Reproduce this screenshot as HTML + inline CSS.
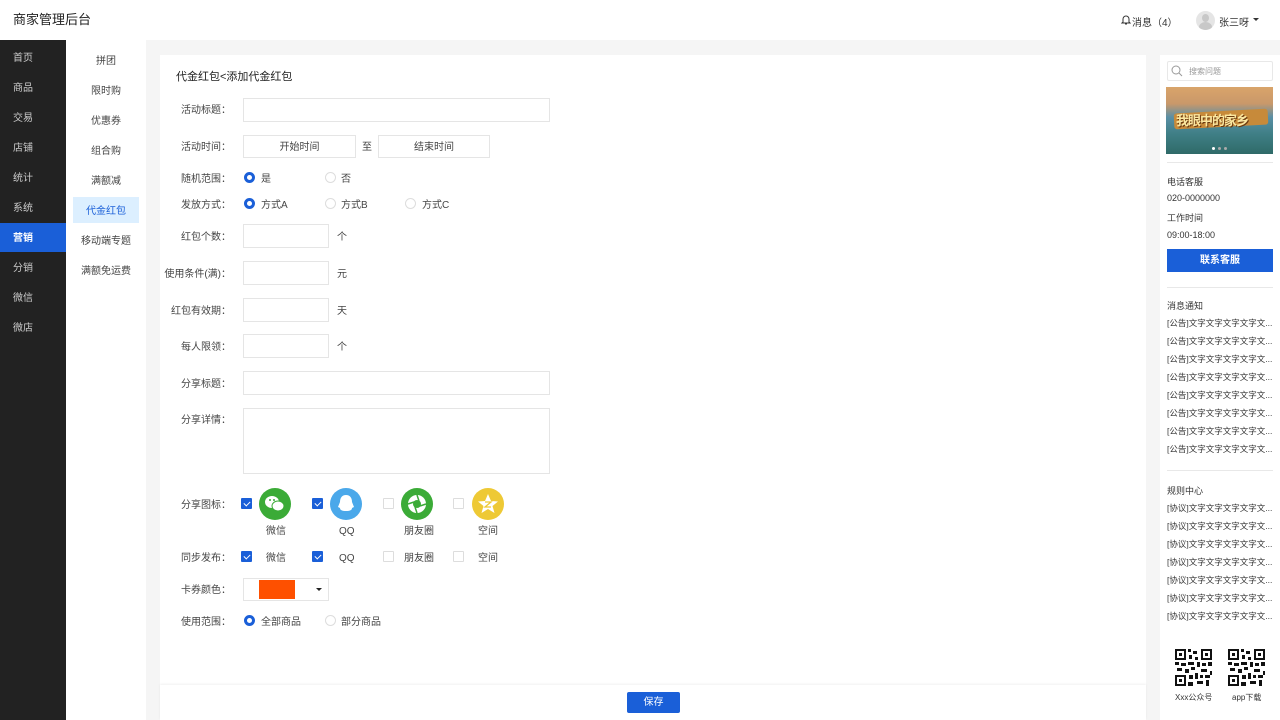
<!DOCTYPE html>
<html><head><meta charset="utf-8"><style>
*{margin:0;padding:0;box-sizing:border-box}
body{width:1280px;height:720px;overflow:hidden;background:#f5f5f5;font-family:"Liberation Sans","Noto Sans CJK SC",sans-serif;color:#333;position:relative;font-size:10px}
.a{position:absolute}
.hdr{left:0;top:0;width:1280px;height:40px;background:#fff}
.side{left:0;top:40px;width:66px;height:680px;background:#222}
.side div{position:absolute;left:13px;color:#ccc;font-size:10px;line-height:12px;margin-top:1px}
.sub{left:66px;top:40px;width:80px;height:680px;background:#fff}
.sub div{position:absolute;width:80px;text-align:center;font-size:10px;color:#444;line-height:12px;margin-top:1px}
.card{left:160px;top:55px;width:986px;height:640px;background:#fff}
.lbl{position:absolute;width:80px;text-align:right;font-size:10px;color:#444;line-height:12px;left:151px;margin-top:2px}
.inp{position:absolute;border:1px solid #e5e5e5;background:#fff;text-align:center;font-size:10px;color:#444}
.r{position:absolute;width:11px;height:11px;border-radius:50%;border:1px solid #ddd;background:#fff}
.r.on{border:3px solid #1a5fd8}
.t{position:absolute;font-size:10px;color:#444;line-height:12px;margin-top:2px}
.cb{position:absolute;width:11px;height:11px;border:1px solid #ddd;border-radius:1px;background:#fff}
.cb.on{background:#1a5fd8;border-color:#1a5fd8}
.cb.on:after{content:"";position:absolute;left:3px;top:1px;width:3px;height:5px;border:solid #fff;border-width:0 1.3px 1.3px 0;transform:rotate(45deg)}
.ic{position:absolute;width:32px;height:32px;border-radius:50%}
.rp{left:1160px;top:55px;width:120px;height:665px;background:#fff}
.rt{position:absolute;left:1167px;font-size:9px;color:#333;line-height:11px;white-space:nowrap}
.hr{position:absolute;left:1167px;width:106px;height:1px;background:#e8e8e8}
</style></head><body>
<div class="a hdr"></div>
<div class="a" style="left:13px;top:11px;font-size:13px;color:#222;line-height:18px">商家管理后台</div>
<svg class="a" style="left:1121px;top:14px" width="10" height="12" viewBox="0 0 10 12"><path d="M2 8V5a3 3 0 0 1 6 0v3l1 1H1z M4 10h2" fill="none" stroke="#333" stroke-width="1"/></svg>
<div class="a" style="left:1132px;top:14px;font-size:10px">消息（4）</div>
<div class="a" style="left:1196px;top:11px;width:19px;height:19px;border-radius:50%;background:#e5e5e5;overflow:hidden"><div style="position:absolute;left:6px;top:3px;width:7px;height:8px;border-radius:50%;background:#c8c8c8"></div><div style="position:absolute;left:3px;top:11px;width:13px;height:10px;border-radius:50%;background:#c8c8c8"></div></div>
<div class="a" style="left:1219px;top:14px;font-size:10px">张三呀</div>
<div class="a" style="left:1253px;top:18px;border:3px solid transparent;border-top:3px solid #333"></div>

<div class="a side">
<div style="top:12px">首页</div><div style="top:42px">商品</div><div style="top:72px">交易</div><div style="top:102px">店铺</div><div style="top:132px">统计</div><div style="top:162px">系统</div>
<div style="left:0;top:183px;width:66px;height:29px;background:#1a5fd8;margin:0"></div>
<div style="top:192px;color:#fff;font-weight:bold">营销</div>
<div style="top:222px">分销</div><div style="top:252px">微信</div><div style="top:282px">微店</div>
</div>
<div class="a sub">
<div style="top:15px">拼团</div><div style="top:45px">限时购</div><div style="top:75px">优惠券</div><div style="top:105px">组合购</div><div style="top:135px">满额减</div>
<div style="left:7px;top:157px;width:66px;height:26px;background:#dcefff;margin:0"></div>
<div style="top:165px;color:#1a5fd8">代金红包</div>
<div style="top:195px">移动端专题</div><div style="top:225px">满额免运费</div>
</div>

<div class="a card"></div>
<div class="t" style="left:176px;top:69px;font-size:11px;color:#222">代金红包&lt;添加代金红包</div>

<div class="lbl" style="top:103px">活动标题：</div><div class="inp" style="left:243px;top:98px;width:307px;height:24px"></div>
<div class="lbl" style="top:140px">活动时间：</div>
<div class="inp" style="left:243px;top:135px;width:113px;height:23px;line-height:23px">开始时间</div>
<div class="t" style="left:362px;top:140px">至</div>
<div class="inp" style="left:378px;top:135px;width:112px;height:23px;line-height:23px">结束时间</div>
<div class="lbl" style="top:172px">随机范围：</div>
<div class="r on" style="left:244px;top:172px"></div><div class="t" style="left:261px;top:172px">是</div>
<div class="r" style="left:325px;top:172px"></div><div class="t" style="left:341px;top:172px">否</div>
<div class="lbl" style="top:198px">发放方式：</div>
<div class="r on" style="left:244px;top:198px"></div><div class="t" style="left:261px;top:198px">方式A</div>
<div class="r" style="left:325px;top:198px"></div><div class="t" style="left:341px;top:198px">方式B</div>
<div class="r" style="left:405px;top:198px"></div><div class="t" style="left:422px;top:198px">方式C</div>
<div class="lbl" style="top:230px">红包个数：</div><div class="inp" style="left:243px;top:224px;width:86px;height:24px"></div><div class="t" style="left:337px;top:230px">个</div>
<div class="lbl" style="top:267px">使用条件(满)：</div><div class="inp" style="left:243px;top:261px;width:86px;height:24px"></div><div class="t" style="left:337px;top:267px">元</div>
<div class="lbl" style="top:304px">红包有效期：</div><div class="inp" style="left:243px;top:298px;width:86px;height:24px"></div><div class="t" style="left:337px;top:304px">天</div>
<div class="lbl" style="top:340px">每人限领：</div><div class="inp" style="left:243px;top:334px;width:86px;height:24px"></div><div class="t" style="left:337px;top:340px">个</div>
<div class="lbl" style="top:377px">分享标题：</div><div class="inp" style="left:243px;top:371px;width:307px;height:24px"></div>
<div class="lbl" style="top:413px">分享详情：</div><div class="inp" style="left:243px;top:408px;width:307px;height:66px"></div>

<div class="lbl" style="top:498px">分享图标：</div>
<div class="cb on" style="left:241px;top:498px"></div>
<div class="ic" style="left:259px;top:488px;background:#3bab37"><svg width="32" height="32" viewBox="0 0 32 32"><ellipse cx="13" cy="14" rx="7" ry="6" fill="#fff"/><ellipse cx="19" cy="18" rx="6" ry="5" fill="#fff" stroke="#3bab37" stroke-width="1"/><circle cx="11" cy="12" r="1" fill="#3bab37"/><circle cx="15" cy="12" r="1" fill="#3bab37"/></svg></div>
<div class="t" style="left:266px;top:524px">微信</div>
<div class="cb on" style="left:312px;top:498px"></div>
<div class="ic" style="left:330px;top:488px;background:#4aa8ea"><svg width="32" height="32" viewBox="0 0 32 32"><path d="M16 7c-4 0-6 3-6 7l-2 5 2 1c0 2 2 3 6 3s6-1 6-3l2-1-2-5c0-4-2-7-6-7z" fill="#fff"/></svg></div>
<div class="t" style="left:339px;top:524px">QQ</div>
<div class="cb" style="left:383px;top:498px"></div>
<div class="ic" style="left:401px;top:488px;background:#3bab37"><svg width="32" height="32" viewBox="0 0 32 32"><circle cx="16" cy="16" r="9" fill="#fff"/><circle cx="16" cy="16" r="4" fill="#3bab37"/><path d="M16 7l2 6M25 16l-6 2M16 25l-2-6M7 16l6-2" stroke="#3bab37" stroke-width="1.5"/></svg></div>
<div class="t" style="left:404px;top:524px">朋友圈</div>
<div class="cb" style="left:453px;top:498px"></div>
<div class="ic" style="left:472px;top:488px;background:#eec935"><svg width="32" height="32" viewBox="0 0 32 32"><path d="M16 6l3 7 7 .5-5.5 4.5 2 7-6.5-4-6.5 4 2-7L6 13.5l7-.5z" fill="#fff"/><path d="M13 14h6l-6 5h6" stroke="#eec935" stroke-width="1.3" fill="none"/></svg></div>
<div class="t" style="left:478px;top:524px">空间</div>

<div class="lbl" style="top:551px">同步发布：</div>
<div class="cb on" style="left:241px;top:551px"></div><div class="t" style="left:266px;top:551px">微信</div>
<div class="cb on" style="left:312px;top:551px"></div><div class="t" style="left:339px;top:551px">QQ</div>
<div class="cb" style="left:383px;top:551px"></div><div class="t" style="left:404px;top:551px">朋友圈</div>
<div class="cb" style="left:453px;top:551px"></div><div class="t" style="left:478px;top:551px">空间</div>

<div class="lbl" style="top:583px">卡券颜色：</div>
<div class="inp" style="left:243px;top:578px;width:86px;height:23px"></div>
<div class="a" style="left:259px;top:580px;width:36px;height:19px;background:#fe5000"></div>
<div class="a" style="left:316px;top:588px;border:3px solid transparent;border-top:3px solid #222"></div>
<div class="lbl" style="top:615px">使用范围：</div>
<div class="r on" style="left:244px;top:615px"></div><div class="t" style="left:261px;top:615px">全部商品</div>
<div class="r" style="left:325px;top:615px"></div><div class="t" style="left:341px;top:615px">部分商品</div>

<div class="a" style="left:160px;top:685px;width:986px;height:35px;background:#fff;box-shadow:0 -1px 2px rgba(0,0,0,.06)"></div>
<div class="a" style="left:627px;top:692px;width:53px;height:21px;background:#1a5fd8;border-radius:2px;color:#fff;text-align:center;line-height:21px;font-size:10px">保存</div>

<div class="a rp"></div>
<div class="a" style="left:1167px;top:61px;width:106px;height:20px;border:1px solid #e8e8e8;border-radius:2px"></div>
<svg class="a" style="left:1171px;top:65px" width="12" height="12" viewBox="0 0 12 12"><circle cx="5" cy="5" r="4" fill="none" stroke="#999"/><path d="M8 8l3 3" stroke="#999"/></svg>
<div class="rt" style="left:1189px;top:66px;color:#999;font-size:8px">搜索问题</div>
<div class="a" style="left:1166px;top:87px;width:107px;height:67px;background:linear-gradient(180deg,#d9a46a 0%,#c9986a 25%,#5a8fa5 45%,#3f7f86 70%,#2f6a68 100%);overflow:hidden">
<div style="position:absolute;left:8px;top:24px;width:94px;height:16px;background:#c78a3a;border-radius:3px;transform:rotate(-3deg)"></div>
<div style="position:absolute;left:10px;top:23px;font-size:13px;font-weight:bold;color:#fbe7a0;white-space:nowrap;letter-spacing:-1px;text-shadow:1px 1px 0 #6a3a10">我眼中的家乡</div>
<div style="position:absolute;left:46px;top:60px;width:3px;height:3px;border-radius:50%;background:#fff"></div>
<div style="position:absolute;left:52px;top:60px;width:3px;height:3px;border-radius:50%;background:#aaa"></div>
<div style="position:absolute;left:58px;top:60px;width:3px;height:3px;border-radius:50%;background:#aaa"></div>
</div>
<div class="hr" style="top:162px"></div>
<div class="rt" style="top:177px">电话客服</div>
<div class="rt" style="top:193px">020-0000000</div>
<div class="rt" style="top:213px">工作时间</div>
<div class="rt" style="top:230px">09:00-18:00</div>
<div class="a" style="left:1167px;top:249px;width:106px;height:23px;background:#1a5fd8;color:#fff;text-align:center;line-height:23px;font-size:10px;font-weight:bold">联系客服</div>
<div class="hr" style="top:287px"></div>
<div class="rt" style="top:301px">消息通知</div>
<div class="rt" style="top:318px;font-size:8.5px">[公告]文字文字文字文字文...</div>
<div class="rt" style="top:336px;font-size:8.5px">[公告]文字文字文字文字文...</div>
<div class="rt" style="top:354px;font-size:8.5px">[公告]文字文字文字文字文...</div>
<div class="rt" style="top:372px;font-size:8.5px">[公告]文字文字文字文字文...</div>
<div class="rt" style="top:390px;font-size:8.5px">[公告]文字文字文字文字文...</div>
<div class="rt" style="top:408px;font-size:8.5px">[公告]文字文字文字文字文...</div>
<div class="rt" style="top:426px;font-size:8.5px">[公告]文字文字文字文字文...</div>
<div class="rt" style="top:444px;font-size:8.5px">[公告]文字文字文字文字文...</div>
<div class="hr" style="top:470px"></div>
<div class="rt" style="top:486px">规则中心</div>
<div class="rt" style="top:503px;font-size:8.5px">[协议]文字文字文字文字文...</div>
<div class="rt" style="top:521px;font-size:8.5px">[协议]文字文字文字文字文...</div>
<div class="rt" style="top:539px;font-size:8.5px">[协议]文字文字文字文字文...</div>
<div class="rt" style="top:557px;font-size:8.5px">[协议]文字文字文字文字文...</div>
<div class="rt" style="top:575px;font-size:8.5px">[协议]文字文字文字文字文...</div>
<div class="rt" style="top:593px;font-size:8.5px">[协议]文字文字文字文字文...</div>
<div class="rt" style="top:611px;font-size:8.5px">[协议]文字文字文字文字文...</div>
<svg class="a" style="left:1175px;top:649px" width="37" height="37" viewBox="0 0 37 37"><g fill="#111"><path d="M0 0h11v11H0zM2 2v7h7V2zM4 4h3v3H4z" fill-rule="evenodd"/><path d="M26 0h11v11H26zM28 2v7h7V2zM30 4h3v3h-3z" fill-rule="evenodd"/><path d="M0 26h11v11H0zM2 28v7h7v-7zM4 30h3v3H4z" fill-rule="evenodd"/><path d="M13 0h3v3h-3zM18 2h4v3h-4zM14 6h3v4h-3zM20 8h3v3h-3zM0 13h4v3H0zM6 14h5v3H6zM13 13h6v3h-6zM22 13h3v5h-3zM27 14h4v3h-4zM33 13h4v4h-4zM2 19h5v3H2zM10 20h4v4h-4zM16 18h4v3h-4zM26 20h6v3h-6zM14 26h4v4h-4zM20 24h3v6h-3zM25 26h3v3h-3zM30 26h5v3h-5zM13 33h5v4h-5zM22 32h6v3h-6zM31 31h3v6h-3zM35 22h2v4h-2z"/></g></svg>
<svg class="a" style="left:1228px;top:649px" width="37" height="37" viewBox="0 0 37 37"><g fill="#111"><path d="M0 0h11v11H0zM2 2v7h7V2zM4 4h3v3H4z" fill-rule="evenodd"/><path d="M26 0h11v11H26zM28 2v7h7V2zM30 4h3v3h-3z" fill-rule="evenodd"/><path d="M0 26h11v11H0zM2 28v7h7v-7zM4 30h3v3H4z" fill-rule="evenodd"/><path d="M13 0h3v3h-3zM18 2h4v3h-4zM14 6h3v4h-3zM20 8h3v3h-3zM0 13h4v3H0zM6 14h5v3H6zM13 13h6v3h-6zM22 13h3v5h-3zM27 14h4v3h-4zM33 13h4v4h-4zM2 19h5v3H2zM10 20h4v4h-4zM16 18h4v3h-4zM26 20h6v3h-6zM14 26h4v4h-4zM20 24h3v6h-3zM25 26h3v3h-3zM30 26h5v3h-5zM13 33h5v4h-5zM22 32h6v3h-6zM31 31h3v6h-3zM35 22h2v4h-2z"/></g></svg>
<div class="rt" style="left:1175px;top:692px;font-size:8px">Xxx公众号</div>
<div class="rt" style="left:1232px;top:692px;font-size:8px">app下载</div>
</body></html>
